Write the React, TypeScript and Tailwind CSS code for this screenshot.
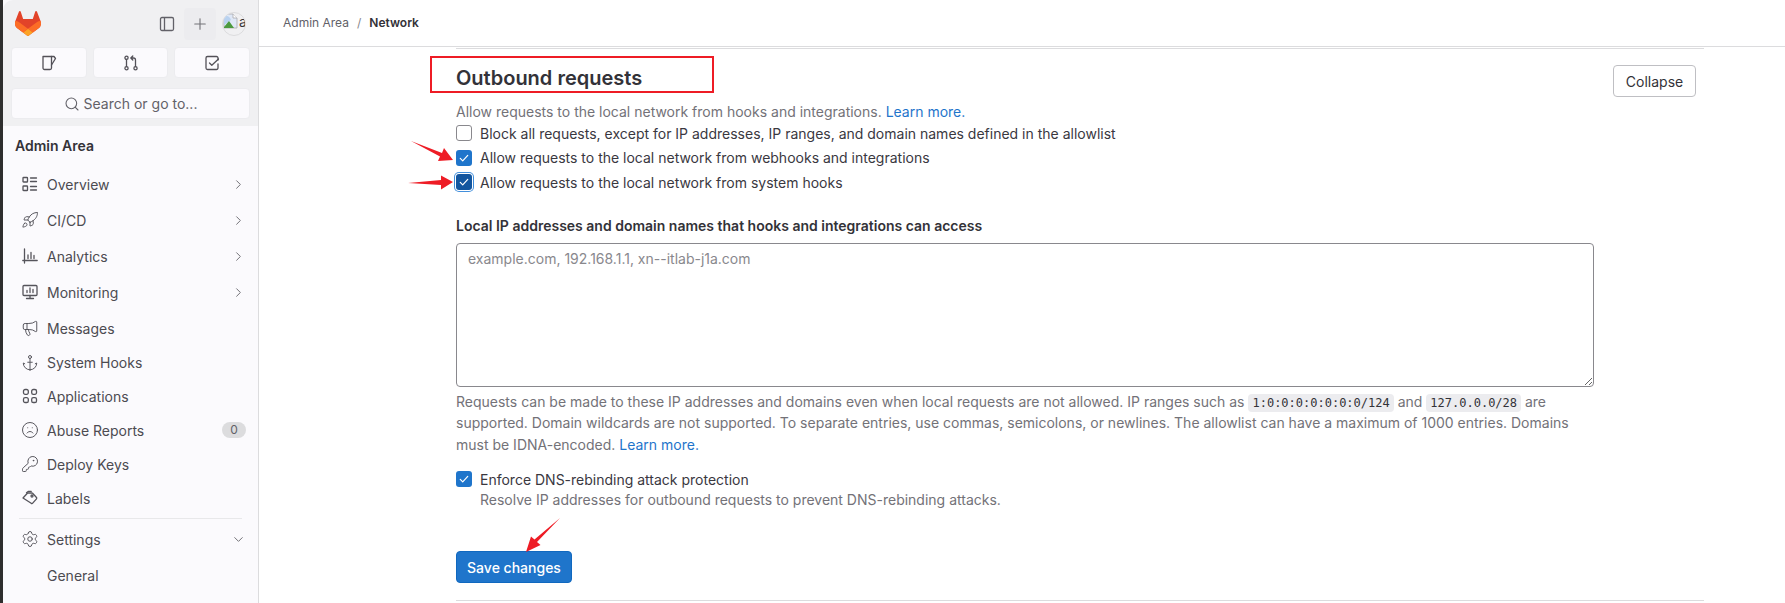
import { ChevronDown, ChevronRight, Search, Plus, Rocket, Megaphone, Anchor, Frown, Settings, KeyRound } from "lucide-react";
import type { ReactNode } from "react";

const ic = "w-4 h-4 text-[#55545b] shrink-0";
const S = ({ children, className = ic }: { children: ReactNode; className?: string }) => (
  <svg viewBox="0 0 16 16" fill="none" stroke="currentColor" strokeWidth="1.3" strokeLinecap="round" strokeLinejoin="round" className={className}>{children}</svg>
);

const OverviewIcon = () => (
  <S>
    <rect x="1" y="1.5" width="4.5" height="4.5" rx="0.6" />
    <rect x="1" y="10" width="4.5" height="4.5" rx="0.6" />
    <path d="M8.5 2h6M8.5 5.5h6M8.5 10.5h6M8.5 14h6" />
  </S>
);
const AnalyticsIcon = () => (
  <S>
    <path d="M2.5 1v14M.8 12.5h14.4M6 7v3.5M9 4.5v6M12 7.5v3" />
  </S>
);
const MonitorIcon = () => (
  <S>
    <rect x="1" y="1.5" width="14" height="10" rx="1" />
    <path d="M4.5 14.5h7M8 11.5v3M5 8.5V6.5M8 8.5V4M11 8.5V5.5" />
  </S>
);
const AppsIcon = () => (
  <S>
    <rect x="1.5" y="1.5" width="4.8" height="4.8" rx="1.6" />
    <rect x="9.7" y="1.5" width="4.8" height="4.8" rx="1.6" />
    <rect x="1.5" y="9.7" width="4.8" height="4.8" rx="1.6" />
    <rect x="9.7" y="9.7" width="4.8" height="4.8" rx="1.6" />
  </S>
);
const LabelsIcon = () => (
  <S>
    <path d="M1 8l4.6-5h4.2a1 1 0 0 1 .8.3l3.9 4.2a1 1 0 0 1 0 1.3l-3.8 4.4a1 1 0 0 1-1.5 0L1 8z" />
    <path d="M4.5 2.8L6.2 1.4h3" />
    <circle cx="10" cy="6" r="1" />
  </S>
);
const IssueIcon = () => (
  <S className="w-4 h-4 text-[#535158]">
    <path d="M2 1.5h8.5v11.5a1.5 1.5 0 0 1-1.5 1.5H3.5A1.5 1.5 0 0 1 2 13V1.5z" />
    <path d="M10.5 1.5h2.5l1.5 2-4 6.5" />
  </S>
);
const MrIcon = () => (
  <S className="w-4 h-4 text-[#535158]">
    <circle cx="3.5" cy="2.8" r="1.6" />
    <circle cx="3.5" cy="13.2" r="1.6" />
    <circle cx="12.5" cy="13.2" r="1.6" />
    <path d="M3.5 4.4v7.2M12.5 11.6V5a2 2 0 0 0-2-2H8M9.8 1L7.8 3l2 2" />
  </S>
);
const TodoIcon = () => (
  <S className="w-4 h-4 text-[#535158]">
    <path d="M14 5V3a1.5 1.5 0 0 0-1.5-1.5h-9A1.5 1.5 0 0 0 2 3v10a1.5 1.5 0 0 0 1.5 1.5h9A1.5 1.5 0 0 0 14 13V9" />
    <path d="M5.5 8l2.3 2.3L14.5 4" />
  </S>
);

const Logo = () => (
  <svg viewBox="0 0 25 24" className="w-[26px] h-[25px]">
    <path fill="#E24329" d="m24.507 9.5-.034-.09L21.082.562a.896.896 0 0 0-1.694.091l-2.29 7.01H7.825L5.535.653a.898.898 0 0 0-1.694-.09L.451 9.411.416 9.5a6.297 6.297 0 0 0 2.09 7.278l.012.01.03.022 5.16 3.867 2.56 1.935 1.554 1.176a1.051 1.051 0 0 0 1.268 0l1.555-1.176 2.56-1.935 5.197-3.89.014-.01A6.297 6.297 0 0 0 24.507 9.5Z" />
    <path fill="#FC6D26" d="m24.507 9.5-.034-.09a11.44 11.44 0 0 0-4.56 2.051l-7.447 5.632 4.742 3.584 5.197-3.89.014-.01A6.297 6.297 0 0 0 24.507 9.5Z" />
    <path fill="#FCA326" d="m7.707 20.677 2.56 1.935 1.555 1.176a1.051 1.051 0 0 0 1.268 0l1.555-1.176 2.56-1.935-4.743-3.584-4.755 3.584Z" />
    <path fill="#FC6D26" d="M5.01 11.461a11.43 11.43 0 0 0-4.56-2.05L.416 9.5a6.297 6.297 0 0 0 2.09 7.278l.012.01.03.022 5.16 3.867 4.745-3.584-7.444-5.632Z" />
  </svg>
);

const BrokenImage = () => (
  <svg viewBox="0 0 16 16" className="w-4 h-4 shrink-0">
    <path d="M1 1h9l4 4v10H1z" fill="#dfe8f7" stroke="#a9a9ad" strokeWidth="0.8" />
    <path d="M1 3 Q6 2 8 7 L1 12z" fill="#b9d2f0" />
    <path d="M1 14l5-6 5 7H1z" fill="#4c9a3f" />
    <path d="M10 1v4h4" fill="#fff" stroke="#a9a9ad" strokeWidth="0.8" />
  </svg>
);

const iconCls = "w-[18px] h-[18px] -ml-px text-[#55545b] shrink-0";

function Item({ icon, label, h, right }: { icon: ReactNode; label: string; h: string; right?: ReactNode }) {
  return (
    <div className={`flex items-center pl-[19px] pr-[12px] ${h}`}>
      <span className="w-[25px] shrink-0 flex">{icon}</span>
      <span className="flex-1 text-[14px] text-[#4c4b51]">{label}</span>
      {right}
    </div>
  );
}

const chev = <ChevronRight className="w-[15px] h-[15px] text-[#737278]" strokeWidth={1.6} />;

function Check({ checked, focus }: { checked?: boolean; focus?: boolean }) {
  if (!checked)
    return <span className="w-4 h-4 rounded-[3px] border border-[#89888d] bg-white shrink-0 block" />;
  return (
    <span
      className={`w-4 h-4 rounded-[3px] shrink-0 flex items-center justify-center ${focus ? "bg-[#13569f] shadow-[0_0_0_1px_#ffffff,0_0_0_2px_#428fdc]" : "bg-[#1f75cb]"}`}
    >
      <svg viewBox="0 0 16 16" className="w-3 h-3" fill="none" stroke="#fff" strokeWidth="1.6" strokeLinecap="round" strokeLinejoin="round">
        <path d="M3 8.5l3.3 3.3L13 4.5" />
      </svg>
    </span>
  );
}

const CheckRow = ({ label, checked, focus }: { label: string; checked?: boolean; focus?: boolean }) => (
  <div className="flex items-center gap-2 h-[24.5px] text-[14px] text-[#3a383f]">
    <Check checked={checked} focus={focus} />
    <span>{label}</span>
  </div>
);

const Code = ({ children }: { children: ReactNode }) => (
  <code className="bg-[#ececef] rounded-[4px] px-[4px] py-[2px] text-[#333238] text-[12px] leading-none font-['DejaVu_Sans_Mono',monospace]">{children}</code>
);

export default function App() {
  return (
    <div className="relative flex h-[603px] w-[1785px] overflow-hidden bg-white font-['Inter',sans-serif] text-[14px] text-[#333238]">
      <div className="w-[3px] bg-[#2e2e2e] shrink-0" />
      <aside className="w-[256px] shrink-0 border-r border-[#dcdcde] bg-[#fbfafd] flex flex-col">
        <div className="bg-[#f0f0f2] h-[126px] px-[8px] shrink-0 rounded-tl-[10px]">
          <div className="flex items-center h-[47px] pl-[4px]">
            <Logo />
            <div className="ml-auto flex items-center">
              <svg viewBox="0 0 16 16" className="w-[16px] h-[16px] text-[#626168] mr-[9px]" fill="none" stroke="currentColor" strokeWidth="1.3">
                <rect x="1.5" y="1.5" width="13" height="13" rx="1.5" />
                <path d="M5.5 1.5v13" />
              </svg>
              <div className="w-[32px] h-[32px] rounded-[4px] bg-[#ececef] flex items-center justify-center">
                <Plus className="w-[18px] h-[18px] text-[#737278]" strokeWidth={1.5} />
              </div>
              <div className="relative ml-[6px] mr-[4px] w-[24px] h-[24px] rounded-full border border-[#dcdcde] overflow-hidden flex items-start text-[14px] leading-[17px] text-[#333238]">
                <BrokenImage />
                <span>a</span>
              </div>
            </div>
          </div>
          <div className="flex gap-[6px]">
            {[<IssueIcon key="1" />, <MrIcon key="2" />, <TodoIcon key="3" />].map((x, i) => (
              <div key={i} className="flex-1 h-[31px] rounded-[4px] bg-[#fbfafd] border border-[#ececef] flex items-center justify-center">{x}</div>
            ))}
          </div>
          <div className="mt-[10px] h-[31px] rounded-[4px] bg-[#fbfafd] border border-[#ececef] flex items-center justify-center gap-[4px] text-[14px] text-[#626168]">
            <Search className="w-[16px] h-[16px] text-[#626168]" strokeWidth={1.6} />
            <span>Search or go to...</span>
          </div>
        </div>
        <div className="pl-[12px] pt-[10px] pb-[8px] h-[40px] text-[14px] font-semibold text-[#333238] leading-[20px]">Admin Area</div>
        <Item h="h-[36px]" icon={<OverviewIcon />} label="Overview" right={chev} />
        <Item h="h-[36px]" icon={<Rocket className={iconCls} strokeWidth={1.3} />} label="CI/CD" right={chev} />
        <Item h="h-[36px]" icon={<AnalyticsIcon />} label="Analytics" right={chev} />
        <Item h="h-[36px]" icon={<MonitorIcon />} label="Monitoring" right={chev} />
        <Item h="h-[36px]" icon={<Megaphone className={iconCls} strokeWidth={1.3} />} label="Messages" />
        <Item h="h-[33px]" icon={<Anchor className={iconCls} strokeWidth={1.3} />} label="System Hooks" />
        <Item h="h-[34px]" icon={<AppsIcon />} label="Applications" />
        <Item
          h="h-[34px]"
          icon={<Frown className={iconCls} strokeWidth={1.3} />}
          label="Abuse Reports"
          right={<span className="w-[24px] h-[16px] rounded-full bg-[#dcdcde] text-[12px] leading-[16px] text-center text-[#626168]">0</span>}
        />
        <Item h="h-[34px]" icon={<KeyRound className={iconCls} strokeWidth={1.3} />} label="Deploy Keys" />
        <Item h="h-[34px]" icon={<LabelsIcon />} label="Labels" />
        <div className="mx-[16px] mt-[3px] mb-[2px] h-px bg-[#e8e8ea]" />
        <Item h="h-[36px]" icon={<Settings className={iconCls} strokeWidth={1.3} />} label="Settings" right={<ChevronDown className="w-[15px] h-[15px] text-[#737278]" strokeWidth={1.6} />} />
        <Item h="h-[36px]" icon={<span />} label="General" />
      </aside>

      <main className="flex-1 min-w-0 flex flex-col">
        <div className="h-[47px] shrink-0 border-b border-[#dcdcde] flex items-center pl-[24px] text-[12px] text-[#626168]">
          <span>Admin Area</span>
          <span className="mx-[8px] text-[#89888d]">/</span>
          <span className="font-semibold text-[#333238]">Network</span>
        </div>
        <section className="ml-[197px] w-[1248px] border-t border-[#dcdcde] mt-px">
          <div className="flex justify-between pr-[8px]">
            <div>
              <h2 className="mt-[15px] text-[20px] leading-[28px] font-semibold text-[#333238]">Outbound requests</h2>
              <p className="mt-[10px] text-[14px] leading-[20px] text-[#737278]">
                Allow requests to the local network from hooks and integrations. <span className="text-[#1f75cb]">Learn more.</span>
              </p>
            </div>
            <button className="mt-[16px] w-[83px] h-[32px] rounded-[4px] border border-[#bfbfc3] text-[14px] text-[#333238] bg-white">Collapse</button>
          </div>
          <div className="-mt-px">
            <CheckRow label="Block all requests, except for IP addresses, IP ranges, and domain names defined in the allowlist" />
            <CheckRow label="Allow requests to the local network from webhooks and integrations" checked />
            <CheckRow label="Allow requests to the local network from system hooks" checked focus />
          </div>
          <label className="block mt-[21px] text-[14px] leading-[20px] font-semibold text-[#333238]">Local IP addresses and domain names that hooks and integrations can access</label>
          <textarea
            className="block mt-[7px] w-[1138px] h-[144px] rounded-[4px] border border-[#89888d] px-[11px] py-[5px] text-[14px] leading-[20px] outline-none placeholder:text-[#89888d]"
            placeholder="example.com, 192.168.1.1, xn--itlab-j1a.com"
          />
          <p className="mt-[4px] w-[1138px] text-[14px] leading-[21.5px] text-[#737278]">
            Requests can be made to these IP addresses and domains even when local requests are not allowed. IP ranges such as <Code>1:0:0:0:0:0:0:0/124</Code> and <Code>127.0.0.0/28</Code> are supported. Domain wildcards are not supported. To separate entries, use commas, semicolons, or newlines. The allowlist can have a maximum of 1000 entries. Domains must be IDNA-encoded. <span className="text-[#1f75cb]">Learn more.</span>
          </p>
          <div className="mt-[15px] flex gap-2">
            <span className="mt-[1px]"><Check checked /></span>
            <div>
              <div className="text-[14px] leading-[20px] text-[#3a383f]">Enforce DNS-rebinding attack protection</div>
              <div className="text-[14px] leading-[20px] text-[#737278]">Resolve IP addresses for outbound requests to prevent DNS-rebinding attacks.</div>
            </div>
          </div>
          <button className="mt-[41px] block w-[116px] h-[32px] rounded-[4px] bg-[#1f75cb] border border-[#1068bf] text-white text-[14px] font-medium">Save changes</button>
          <div className="mt-[17px] h-px bg-[#dcdcde]" />
        </section>
      </main>

      {/* annotations */}
      <div className="absolute left-[430px] top-[56px] w-[284px] h-[37px] border-2 border-[#ee1c25] pointer-events-none" />
      <svg className="absolute left-0 top-0 w-[1785px] h-[603px] pointer-events-none" viewBox="0 0 1785 603" fill="#ee1c25">
        <polygon points="411,141 442,153 444,148 453,160 438,161 440,156.5" />
        <polygon points="408,183 441,180 441,175.5 453,182 441,189.5 441,185" />
        <polygon points="560,518 537,542 540.5,545 526,552 531,536.5 534.5,539.5" />
      </svg>
    </div>
  );
}
